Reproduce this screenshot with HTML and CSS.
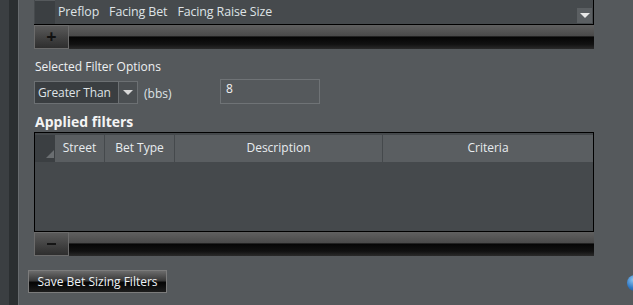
FILE: index.html
```html
<!DOCTYPE html>
<html lang="en">
<head>
<meta charset="UTF-8">
<title>Bet Sizing Filters</title>
<link rel="stylesheet" href="styles.css">
</head>
<body>
    <div class="page">
        <div class="rail rail-a"></div>
        <div class="rail rail-b"></div>
        <div class="rail rail-c"></div>
        <div class="main">
            <div class="list-box">
                <div class="corner"></div>
                <div class="list-row">
                    <span>Preflop</span>
                    <span>Facing Bet</span>
                    <span>Facing Raise Size</span>
                </div>
                <div class="list-arrow"><span class="tri"></span></div>
            </div>
            <div class="bar">
                <div class="bar-btn">+</div>
            </div>

            <div class="label">Selected Filter Options</div>
            <div class="options">
                <div class="select">
                    <div class="select-text">Greater Than</div>
                    <div class="select-arrow"><span class="tri"></span></div>
                </div>
                <div class="unit">(bbs)</div>
                <div class="value-input">8</div>
            </div>

            <h2>Applied filters</h2>
            <div class="table">
                <div class="thead">
                    <div class="th corner-cell"><span class="grip"></span></div>
                    <div class="th street">Street</div>
                    <div class="th bet-type">Bet Type</div>
                    <div class="th desc">Description</div>
                    <div class="th crit">Criteria</div>
                </div>
                <div class="tbody"></div>
            </div>
            <div class="bar">
                <div class="bar-btn minus"><span class="dash"></span></div>
            </div>

            <button class="save">Save Bet Sizing Filters</button>
        </div>
        <div class="orb"></div>
    </div>
</body>
</html>
```

FILE: styles.css
```css
body {
    margin: 0;
    padding: 0;
    background-color: #55595c;
    font-family: "Open Sans", "Noto Sans", sans-serif;
    font-size: 12px;
    color: #e6e8ea;
}

.page {
    display: flex;
    height: 305px;
    overflow: hidden;
    position: relative;
}

.rail {
    flex: none;
}

.rail-a {
    width: 9px;
    background-color: #3b3f42;
}

.rail-b {
    width: 9px;
    background-color: #2b2f31;
}

.rail-c {
    width: 1px;
    background-color: #686c6f;
}

.main {
    width: 560px;
    padding-left: 15px;
    display: flex;
    flex-direction: column;
}

/* top list */
.list-box {
    display: flex;
    height: 24px;
    background-color: #464a4d;
    border-right: 1px solid #000;
    border-bottom: 1px solid #000;
    width: 559px;
}

.corner {
    width: 20px;
    margin-left: 1px;
    background-color: #3b3f42;
    border-top: 1px solid #55595c;
}

.list-row {
    flex: 1;
    display: flex;
    gap: 10px;
    padding-left: 3px;
    padding-top: 3px;
    font-size: 12.4px;
    letter-spacing: -0.1px;
    color: #dfe3e6;
}

.list-arrow {
    width: 15px;
    height: 15px;
    margin-top: 8px;
    margin-right: 1px;
    background-color: #5b5f62;
    display: flex;
    align-items: center;
    justify-content: center;
}

.tri {
    width: 0;
    height: 0;
    border-left: 5px solid transparent;
    border-right: 5px solid transparent;
    border-top: 5px solid #e8e8e8;
}

/* scroll bars with buttons */
.bar {
    height: 24px;
    width: 560px;
    background: linear-gradient(#606060 0%, #4a4a4a 45%, #050505 50%, #111 80%, #2a2a2a 100%);
}

.bar-btn {
    width: 33px;
    height: 22px;
    border: 1px solid #6b6b6b;
    background: linear-gradient(#5a5a5a, #3f3f3f 60%, #2e2e2e);
    color: #111;
    font-size: 18px;
    line-height: 20px;
    text-align: center;
    font-weight: bold;
}

.minus {
    display: flex;
    align-items: center;
    justify-content: center;
}

.dash {
    width: 9px;
    height: 2px;
    background-color: #151515;
}

/* filter options */
.label {
    margin-top: 9px;
    padding-left: 1px;
    color: #eef0f2;
}

.options {
    display: flex;
    align-items: center;
    margin-top: 4px;
}

.select {
    display: flex;
    height: 21px;
    border: 1px solid #6c7073;
    margin-top: 2px;
}

.select-text {
    width: 80px;
    background-color: #3a3e41;
    padding-left: 3px;
    line-height: 21px;
    font-size: 12px;
    letter-spacing: -0.1px;
    color: #dfe3e6;
}

.select-arrow {
    width: 18px;
    background-color: #4b4f52;
    border-left: 1px solid #6c7073;
    display: flex;
    align-items: center;
    justify-content: center;
}

.select-arrow .tri {
    border-top-color: #d8d8d8;
}

.unit {
    width: 76px;
    padding-left: 6px;
    margin-top: 3px;
    color: #dfe3e6;
}

.value-input {
    width: 93px;
    height: 23px;
    border: 1px solid #6f7376;
    padding-left: 5px;
    line-height: 18px;
    color: #f2f2f2;
}

h2 {
    margin: 8px 0 0 1px;
    font-size: 14px;
    font-weight: bold;
    color: #f4f4f4;
    line-height: 20px;
}

/* applied filters table */
.table {
    width: 558px;
    height: 98px;
    border: 1px solid #000;
    background-color: #45494c;
    display: flex;
    flex-direction: column;
}

.thead {
    display: flex;
    height: 27px;
    margin-top: 2px;
    background-color: #5a5e61;
}

.th {
    text-align: center;
    line-height: 26px;
    color: #e8ecef;
    border-right: 1px solid #45494c;
}

.corner-cell {
    width: 20px;
    background-color: #3b3f42;
    border-right: none;
    position: relative;
}

.grip {
    position: absolute;
    right: 1px;
    bottom: 4px;
    width: 0;
    height: 0;
    border-left: 8px solid transparent;
    border-bottom: 8px solid #6a6e71;
}

.street {
    width: 49px;
}

.bet-type {
    width: 69px;
}

.desc {
    width: 207px;
}

.crit {
    flex: 1;
    border-right: none;
}

.save {
    margin-top: 14px;
    margin-left: -6px;
    width: 139px;
    height: 23px;
    border: 1px solid #7c7c7c;
    background: linear-gradient(#6b6b6b, #3a3a3a 45%, #050505 55%, #1c1c1c);
    color: #eef2f6;
    font-family: "Open Sans", "Noto Sans", sans-serif;
    font-size: 12px;
    padding: 0;
    text-align: center;
}

/* partial help icon at the edge of the window */
.orb {
    position: absolute;
    left: 627px;
    top: 275px;
    width: 16px;
    height: 16px;
    border-radius: 50%;
    background: radial-gradient(circle at 40% 30%, #8fc6f0, #2f78c4 55%, #164a8a);
}
```
